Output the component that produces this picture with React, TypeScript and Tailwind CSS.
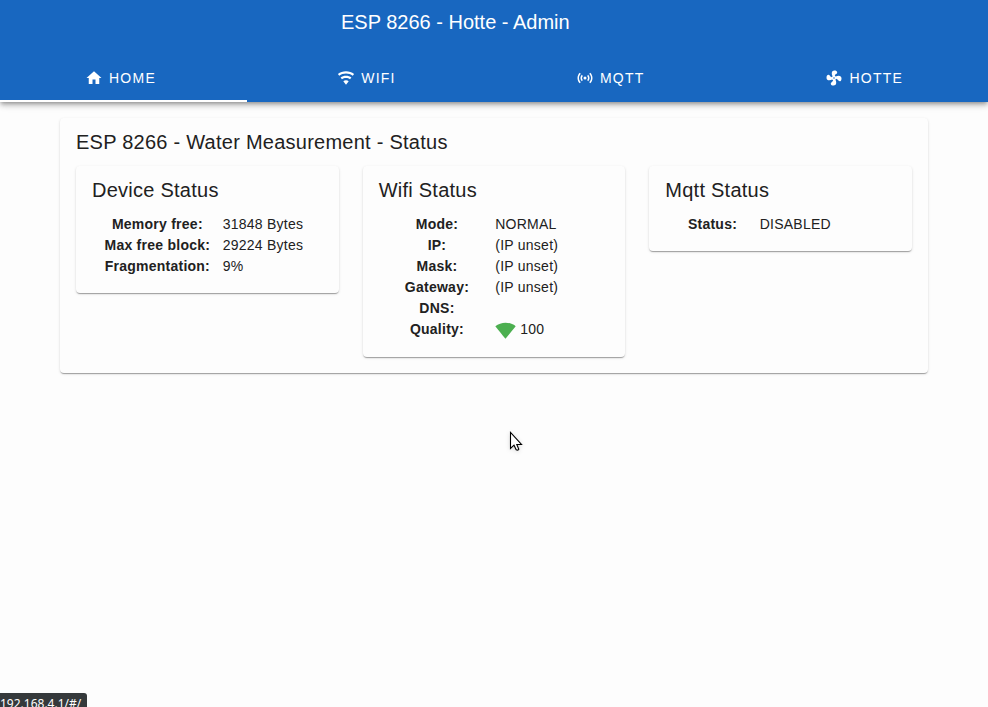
import type { ReactNode } from "react";

const HOME = "M10,20V14H14V20H19V12H22L12,3L2,12H5V20H10Z";
const WIFI =
  "M12,21L15.6,16.2C14.6,15.45 13.35,15 12,15C10.65,15 9.4,15.45 8.4,16.2L12,21M12,3C7.95,3 4.21,4.34 1.2,6.6L3,9C5.5,7.12 8.62,6 12,6C15.38,6 18.5,7.12 21,9L22.8,6.6C19.79,4.34 16.05,3 12,3M12,9C9.3,9 6.81,9.89 4.8,11.4L6.6,13.8C8.1,12.67 9.97,12 12,12C14.03,12 15.9,12.67 17.4,13.8L19.2,11.4C17.19,9.89 14.7,9 12,9Z";
const ACCESS_POINT =
  "M4.93,4.93C3.12,6.74 2,9.24 2,12C2,14.76 3.12,17.26 4.93,19.07L6.34,17.66C4.89,16.22 4,14.22 4,12C4,9.79 4.89,7.78 6.34,6.34L4.93,4.93M19.07,4.93L17.66,6.34C19.11,7.79 20,9.79 20,12C20,14.22 19.11,16.22 17.66,17.66L19.07,19.07C20.88,17.26 22,14.76 22,12C22,9.24 20.88,6.74 19.07,4.93M7.76,7.76C6.67,8.85 6,10.35 6,12C6,13.65 6.67,15.15 7.76,16.24L9.17,14.83C8.45,14.11 8,13.11 8,12C8,10.89 8.45,9.89 9.17,9.17L7.76,7.76M16.24,7.76L14.83,9.17C15.55,9.89 16,10.89 16,12C16,13.11 15.55,14.11 14.83,14.83L16.24,16.24C17.33,15.15 18,13.65 18,12C18,10.35 17.33,8.85 16.24,7.76M12,10A2,2 0 0,0 10,12A2,2 0 0,0 12,14A2,2 0 0,0 14,12A2,2 0 0,0 12,10Z";
const FAN =
  "M12,11A1,1 0 0,0 11,12A1,1 0 0,0 12,13A1,1 0 0,0 13,12A1,1 0 0,0 12,11M12.5,2C17,2 17.11,5.57 14.75,6.75C13.76,7.24 13.32,8.29 13.13,9.22C13.61,9.42 14.03,9.73 14.35,10.13C18.05,8.13 22.03,8.92 22.03,12.5C22.03,17 18.46,17.1 17.28,14.73C16.78,13.74 15.72,13.3 14.79,13.11C14.59,13.59 14.28,14 13.88,14.34C15.87,18.03 15.08,22 11.5,22C7,22 6.91,18.42 9.27,17.24C10.25,16.75 10.69,15.71 10.89,14.79C10.4,14.59 9.97,14.27 9.65,13.87C5.96,15.85 2,15.07 2,11.5C2,7 5.56,6.89 6.74,9.26C7.24,10.25 8.29,10.68 9.22,10.87C9.41,10.39 9.73,9.97 10.14,9.65C8.15,5.96 8.94,2 12.5,2Z";
const SIGNAL =
  "M12,3C7.79,3 3.7,4.41 0.38,7C4.41,12.06 7.89,16.37 12,21.5C16.08,16.42 20.24,11.24 23.65,7C20.32,4.41 16.22,3 12,3Z";

function Icon({ path, className }: { path: string; className: string }) {
  return (
    <svg viewBox="0 0 24 24" fill="currentColor" className={className}>
      <path d={path} />
    </svg>
  );
}

const TABS = [
  { label: "HOME", icon: HOME, pad: "pr-[6px]" },
  { label: "WIFI", icon: WIFI, pad: "pr-[8px]" },
  { label: "MQTT", icon: ACCESS_POINT, pad: "pr-[14.5px]" },
  { label: "HOTTE", icon: FAN, pad: "pr-[0.5px]" },
];

const CARD =
  "rounded bg-[#fdfdfd] shadow-[0_2px_1px_-1px_rgba(0,0,0,0.2),0_1px_1px_0_rgba(0,0,0,0.14),0_1px_3px_0_rgba(0,0,0,0.12)]";

function StatusCard({
  title,
  columns,
  rows,
}: {
  title: string;
  columns: string;
  rows: [string, ReactNode][];
}) {
  return (
    <section className={`${CARD} px-4 pt-2 pb-4`}>
      <h2 className="text-xl leading-8 tracking-[0.25px]">{title}</h2>
      <dl className={`mt-2 grid text-sm leading-[21px] tracking-[0.25px] ${columns}`}>
        {rows.map(([label, value]) => (
          <div key={label} className="contents">
            <dt className="text-center font-bold whitespace-nowrap">{label}</dt>
            <dd className="whitespace-nowrap">{value}</dd>
          </div>
        ))}
      </dl>
    </section>
  );
}

export default function App() {
  return (
    <div className="relative h-[707px] w-[988px] overflow-hidden bg-[#fdfdfd] font-['Liberation_Sans',Arial,sans-serif] text-[#212121]">
      <header className="relative flex h-[102px] flex-col bg-[#1867c0] text-white shadow-[0_2px_4px_-1px_rgba(0,0,0,0.3),0_4px_5px_0_rgba(0,0,0,0.14),0_1px_10px_0_rgba(0,0,0,0.12)]">
        <h1 className="h-[54px] pl-[341px] text-xl leading-[44px]">ESP 8266 - Hotte - Admin</h1>
        <nav className="grid h-12 grid-cols-4">
          {TABS.map((tab, i) => (
            <a
              key={tab.label}
              className={`flex items-center justify-center gap-1.5 border-b-2 pt-0.5 text-sm leading-5 tracking-[1.25px] ${tab.pad} ${i === 0 ? "border-white" : "border-transparent"}`}
            >
              <Icon path={tab.icon} className="size-[18px]" />
              <span>{tab.label}</span>
            </a>
          ))}
        </nav>
      </header>

      <main className={`${CARD} mx-[60px] mt-4 h-[255px] px-4 pt-2`}>
        <h2 className="text-xl leading-8 tracking-[0.25px]">ESP 8266 - Water Measurement - Status</h2>
        <div className="mt-2 grid grid-cols-3 items-start gap-6">
          <StatusCard
            title="Device Status"
            columns="grid-cols-[130.7px_1fr]"
            rows={[
              ["Memory free:", "31848 Bytes"],
              ["Max free block:", "29224 Bytes"],
              ["Fragmentation:", "9%"],
            ]}
          />
          <StatusCard
            title="Wifi Status"
            columns="grid-cols-[116.6px_1fr]"
            rows={[
              ["Mode:", "NORMAL"],
              ["IP:", "(IP unset)"],
              ["Mask:", "(IP unset)"],
              ["Gateway:", "(IP unset)"],
              ["DNS:", ""],
              [
                "Quality:",
                <span className="flex h-[22px] items-start gap-1">
                  <Icon path={SIGNAL} className="mt-px size-[21px] text-[#4caf50]" />
                  100
                </span>,
              ],
            ]}
          />
          <StatusCard title="Mqtt Status" columns="grid-cols-[94.3px_1fr]" rows={[["Status:", "DISABLED"]]} />
        </div>
      </main>

      <svg viewBox="0 0 14 22" className="absolute top-[431px] left-[509px] h-[22px] w-[14px] drop-shadow-sm">
        <path
          d="M1.5 1.5V17.5L5 14.2L7.2 18.8Q8.8 19.8 9.8 18.2L7.8 13.5H12.5Z"
          fill="#fff"
          stroke="#000"
          strokeWidth="1.1"
        />
      </svg>
      <div className="absolute top-[693px] left-0 h-[21px] w-[87px] rounded-tr-[3px] bg-[#35393b] font-['Noto_Sans',sans-serif] text-xs leading-[21px] whitespace-nowrap text-white">
        192.168.4.1/#/
      </div>
    </div>
  );
}
